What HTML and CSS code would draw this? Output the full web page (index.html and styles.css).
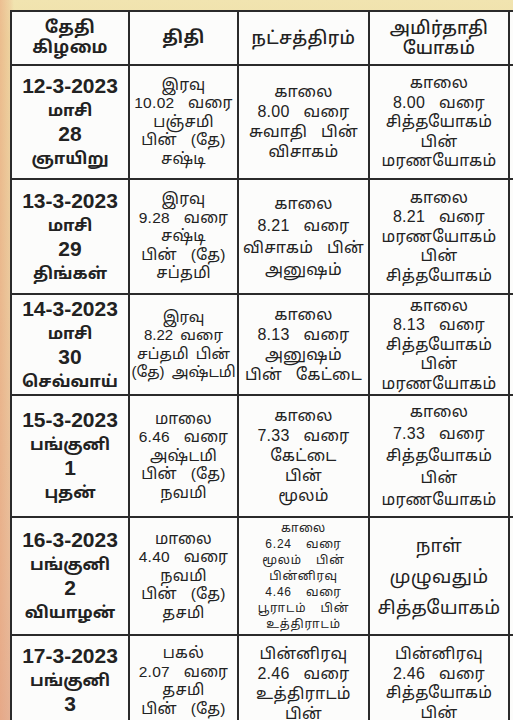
FILE: index.html
```html
<!DOCTYPE html>
<html lang="ta">
<head>
<meta charset="utf-8">
<link rel="stylesheet" href="styles.css">
</head>
<body>
<div class="page">
<table class="cal">
<colgroup>
<col class="c1"><col class="c2"><col class="c3"><col class="c4"><col class="c5">
</colgroup>
<thead>
<tr class="head">
<th class="b">தேதி<br>கிழமை</th>
<th class="b">திதி</th>
<th>நட்சத்திரம்</th>
<th>அமிர்தாதி<br>யோகம்</th>
<th></th>
</tr>
</thead>
<tbody>
<tr class="r1">
<td class="date"><span class="num">12-3-2023</span><br>மாசி<br><span class="num">28</span><br>ஞாயிறு</td>
<td class="tithi">இரவு<br>10.02 வரை<br>பஞ்சமி<br>பின் (தே)<br>சஷ்டி</td>
<td class="star">காலை<br>8.00 வரை<br>சுவாதி பின்<br>விசாகம்</td>
<td class="yoga">காலை<br>8.00 வரை<br>சித்தயோகம்<br>பின்<br>மரணயோகம்</td>
<td></td>
</tr>
<tr class="r2">
<td class="date"><span class="num">13-3-2023</span><br>மாசி<br><span class="num">29</span><br>திங்கள்</td>
<td class="tithi">இரவு<br>9.28 வரை<br>சஷ்டி<br>பின் (தே)<br>சப்தமி</td>
<td class="star wide">காலை<br>8.21 வரை<br>விசாகம் பின்<br>அனுஷம்</td>
<td class="yoga">காலை<br>8.21 வரை<br>மரணயோகம்<br>பின்<br>சித்தயோகம்</td>
<td></td>
</tr>
<tr class="r3">
<td class="date"><span class="num">14-3-2023</span><br>மாசி<br><span class="num">30</span><br>செவ்வாய்</td>
<td class="tithi tight">இரவு<br>8.22 வரை<br>சப்தமி பின்<br>(தே) அஷ்டமி</td>
<td class="star">காலை<br>8.13 வரை<br>அனுஷம்<br>பின் கேட்டை</td>
<td class="yoga">காலை<br>8.13 வரை<br>சித்தயோகம்<br>பின்<br>மரணயோகம்</td>
<td></td>
</tr>
<tr class="r4">
<td class="date"><span class="num">15-3-2023</span><br>பங்குனி<br><span class="num">1</span><br>புதன்</td>
<td class="tithi">மாலை<br>6.46 வரை<br>அஷ்டமி<br>பின் (தே)<br>நவமி</td>
<td class="star">காலை<br>7.33 வரை<br>கேட்டை<br>பின்<br>மூலம்</td>
<td class="yoga wide">காலை<br>7.33 வரை<br>சித்தயோகம்<br>பின்<br>மரணயோகம்</td>
<td></td>
</tr>
<tr class="r5">
<td class="date"><span class="num">16-3-2023</span><br>பங்குனி<br><span class="num">2</span><br>வியாழன்</td>
<td class="tithi">மாலை<br>4.40 வரை<br>நவமி<br>பின் (தே)<br>தசமி</td>
<td class="star small">காலை<br>6.24 வரை<br>மூலம் பின்<br>பின்னிரவு<br>4.46 வரை<br>பூராடம் பின்<br>உத்திராடம்</td>
<td class="yoga big">நாள்<br>முழுவதும்<br>சித்தயோகம்</td>
<td></td>
</tr>
<tr class="r6">
<td class="date"><span class="num">17-3-2023</span><br>பங்குனி<br><span class="num">3</span></td>
<td class="tithi">பகல்<br>2.07 வரை<br>தசமி<br>பின் (தே)</td>
<td class="star">பின்னிரவு<br>2.46 வரை<br>உத்திராடம்<br>பின்</td>
<td class="yoga">பின்னிரவு<br>2.46 வரை<br>சித்தயோகம்<br>பின்</td>
<td></td>
</tr>
</tbody>
</table>
</div>
</body>
</html>
```

FILE: styles.css
```css
html, body {
  margin: 0;
  padding: 0;
  height: 720px;
  overflow: hidden;
}
body {
  background:
    linear-gradient(to right, rgba(232,160,120,0.55) 0px, rgba(232,170,130,0.25) 10px, rgba(0,0,0,0) 14px),
    linear-gradient(to bottom, #f1e4b0 0px, #efe0a8 40px, #ecd3a6 300px, #e8bfa0 600px, #e4b39a 720px);
  font-family: "Liberation Sans", "Noto Sans Tamil", "Lohit Tamil", "Noto Sans", sans-serif;
  color: #222;
}
.page {
  padding: 10px 0 0 10px;
  width: 640px;
}
.cal {
  border-collapse: collapse;
  table-layout: fixed;
  width: 620px;
  background: #fcfcfb;
}
.c1 { width: 118px; }
.c2 { width: 109px; }
.c3 { width: 131px; }
.c4 { width: 140px; }
.c5 { width: 122px; }
.cal th, .cal td {
  border: 2px solid #2b2b2b;
  padding: 0;
  text-align: center;
  vertical-align: middle;
  overflow: hidden;
  white-space: nowrap;
}
.head { height: 54px; }
.head th {
  font-size: 17.5px;
  font-weight: 500;
  line-height: 20px;
  letter-spacing: 0.4px;
}
.head th.b { font-weight: 700; font-size: 17px; }
.r1 { height: 114px; }
.r2 { height: 115px; }
.r3 { height: 101px; }
.r4 { height: 122px; }
.r5 { height: 118px; }
.r6 { height: 140px; }
.r6 td { vertical-align: top; padding-top: 8px; }
.date {
  font-weight: 700;
  font-size: 16.5px;
  line-height: 23px;
}
.date .num {
  font-size: 21px;
}
.tithi, .star, .yoga {
  word-spacing: 9px;
  letter-spacing: 0.3px;
}
.tithi {
  font-size: 15.5px;
  line-height: 18.5px;
}
.tithi.tight {
  word-spacing: 3px;
  letter-spacing: 0;
  font-size: 15px;
}
.star {
  font-size: 16px;
  line-height: 20px;
}
.yoga {
  font-size: 16px;
  line-height: 19.5px;
}
.wide { line-height: 22px; }
.small {
  font-size: 12px;
  line-height: 16px;
  letter-spacing: 0.8px;
  word-spacing: 10px;
}
.big {
  font-size: 18.5px;
  line-height: 31px;
}
```
